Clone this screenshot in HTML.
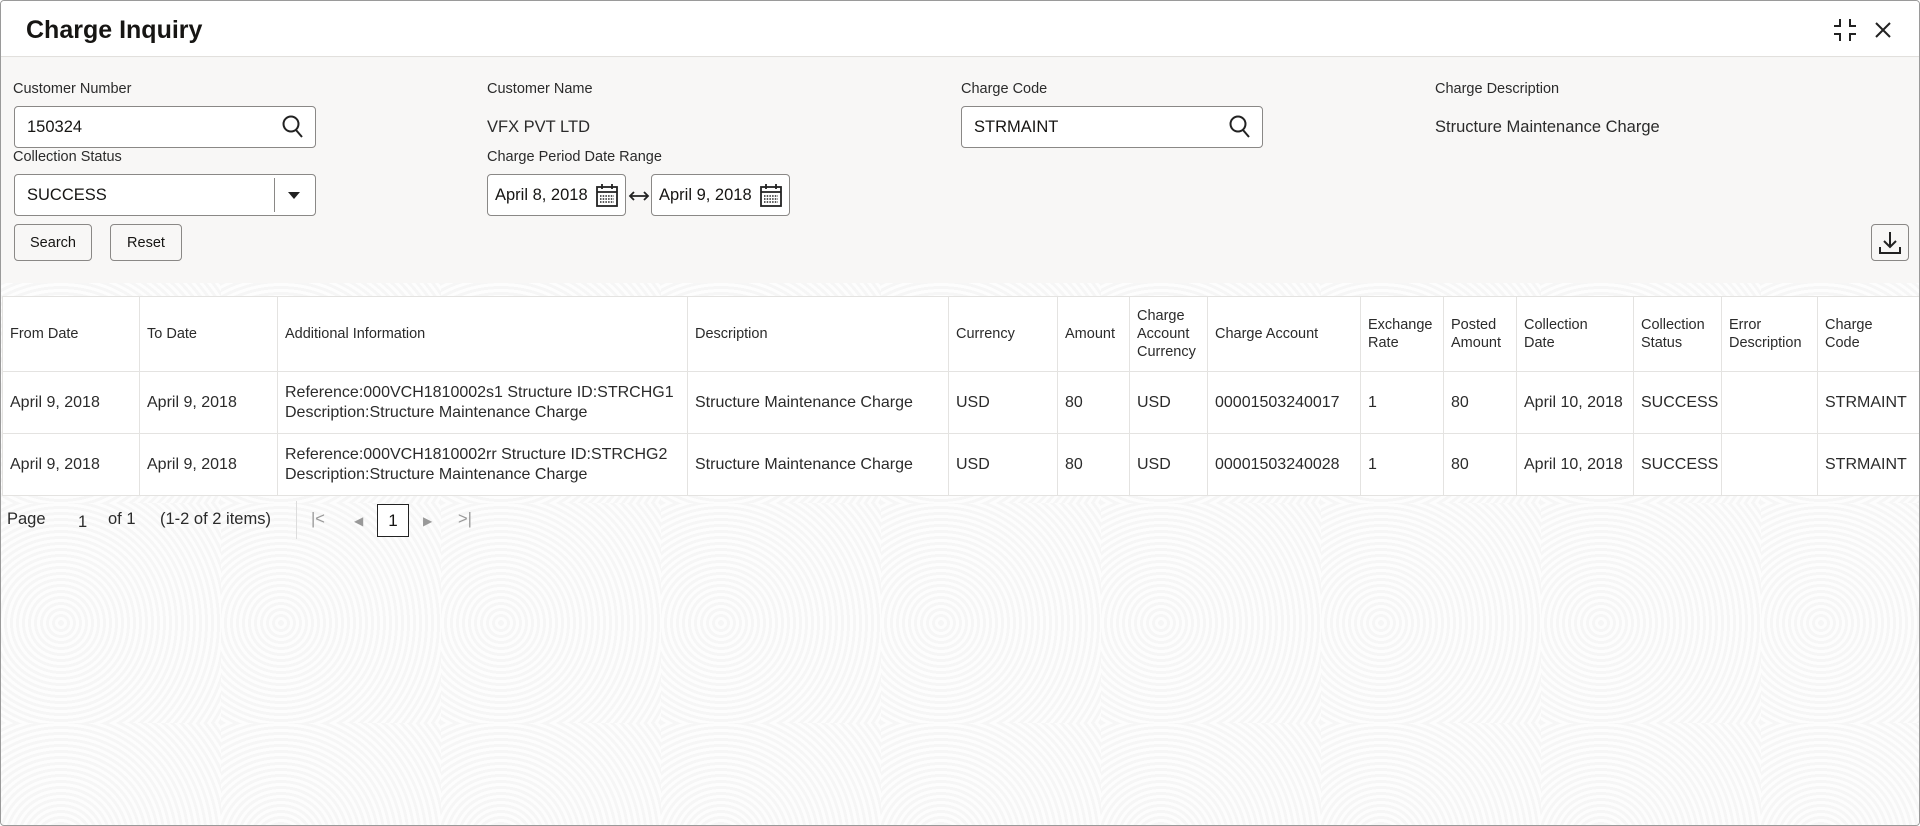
<!DOCTYPE html>
<html><head><meta charset="utf-8"><style>
*{box-sizing:border-box;margin:0;padding:0}
body{width:1920px;height:826px;overflow:hidden;font-family:"Liberation Sans",sans-serif;color:#161513;background:#fff;position:relative}
.frame{position:absolute;left:0;top:0;width:1920px;height:826px;border:1px solid #9a9a9a;border-radius:4px;overflow:hidden;background:#f6f6f5}
.hdr{position:absolute;left:0;top:0;width:100%;height:56px;background:#fff;border-bottom:1px solid #e2e0dd}
.hdr h1{position:absolute;left:25px;top:15px;font-size:25px;font-weight:bold}
.form{position:absolute;left:0;top:57px;width:100%;height:225px;background:#f8f7f6}
.lbl{position:absolute;font-size:14.5px;color:#2b2b2b}
.val{position:absolute;font-size:16.5px;color:#2b2b2b}
.box{position:absolute;background:#fff;border:1px solid #8a8886;border-radius:4px;font-size:16.5px;padding-left:12px;display:flex;align-items:center}
.btn{position:absolute;border:1px solid #8a8886;border-radius:4px;font-size:14.5px;display:flex;align-items:center;justify-content:center;background:#f8f7f6}
.bgpat{position:absolute;left:0;top:282px;width:100%;height:544px;background:repeating-radial-gradient(circle at 60px 120px,#f6f6f6 0 3px,#fdfdfd 3px 6px);background-size:220px 220px}
table{position:absolute;left:1px;top:295px;width:1918px;border-collapse:collapse;background:#fff;table-layout:fixed}
td,th{border:1px solid #e4e3e1;text-align:left;vertical-align:middle;padding:0 7px;overflow:hidden}
th{font-weight:normal;font-size:14.5px;height:75px;line-height:18px;color:#2b2b2b}
td{font-size:16px;height:62px;line-height:20px;color:#2b2b2b;white-space:nowrap}
.pg{position:absolute;top:509px;font-size:16.5px;color:#2b2b2b}
</style></head><body><div class="frame">
<div class="hdr"><h1>Charge Inquiry</h1>
<svg style="position:absolute;left:1832px;top:17px" width="24" height="24" viewBox="0 0 24 24" fill="none" stroke="#222" stroke-width="2"><path d="M1 8h6V1M17 1v7h6M1 16h6v7M17 23v-7h6"/></svg>
<svg style="position:absolute;left:1873px;top:20px" width="18" height="18" viewBox="0 0 18 18" stroke="#222" stroke-width="2"><path d="M2 2L16 16M16 2L2 16"/></svg>
</div>
<div class="form"></div>
<div class="lbl" style="left:12px;top:80px">Customer Number</div>
<div class="box" style="left:13px;top:105px;width:302px;height:42px">150324</div>
<svg style="position:absolute;left:281px;top:114px" width="22" height="24" viewBox="0 0 22 24" fill="none" stroke="#222" stroke-width="2"><circle cx="9" cy="9" r="7.5"/><path d="M14 15l6 7"/></svg>
<div class="lbl" style="left:486px;top:80px">Customer Name</div>
<div class="val" style="left:486px;top:117px">VFX PVT LTD</div>
<div class="lbl" style="left:960px;top:80px">Charge Code</div>
<div class="box" style="left:960px;top:105px;width:302px;height:42px">STRMAINT</div>
<svg style="position:absolute;left:1228px;top:114px" width="22" height="24" viewBox="0 0 22 24" fill="none" stroke="#222" stroke-width="2"><circle cx="9" cy="9" r="7.5"/><path d="M14 15l6 7"/></svg>
<div class="lbl" style="left:1434px;top:80px">Charge Description</div>
<div class="val" style="left:1434px;top:117px">Structure Maintenance Charge</div>
<div class="lbl" style="left:12px;top:148px">Collection Status</div>
<div class="box" style="left:13px;top:173px;width:302px;height:42px">SUCCESS</div>
<div style="position:absolute;left:273px;top:177px;width:1px;height:34px;background:#8a8886"></div>
<div style="position:absolute;left:287px;top:191px;width:0;height:0;border-left:6px solid transparent;border-right:6px solid transparent;border-top:7px solid #222"></div>
<div class="lbl" style="left:486px;top:148px">Charge Period Date Range</div>
<div class="box" style="left:486px;top:173px;width:139px;height:42px;padding-left:7px">April 8, 2018</div>
<div class="box" style="left:650px;top:173px;width:139px;height:42px;padding-left:7px">April 9, 2018</div>
<svg style="position:absolute;left:595px;top:182px" width="22" height="24" viewBox="0 0 22 24" fill="none" stroke="#222" stroke-width="1.8"><rect x="1" y="4" width="20" height="19"/><path d="M1 9h20M6 1v5M16 1v5"/><path d="M4 13h14M4 16h14M4 19h14" stroke-dasharray="1.5 1.2" stroke-width="1.5"/></svg>
<svg style="position:absolute;left:759px;top:182px" width="22" height="24" viewBox="0 0 22 24" fill="none" stroke="#222" stroke-width="1.8"><rect x="1" y="4" width="20" height="19"/><path d="M1 9h20M6 1v5M16 1v5"/><path d="M4 13h14M4 16h14M4 19h14" stroke-dasharray="1.5 1.2" stroke-width="1.5"/></svg>
<svg style="position:absolute;left:627px;top:188px" width="22" height="14" viewBox="0 0 22 14" fill="none" stroke="#222" stroke-width="1.8"><path d="M2 7h18M6 3L2 7l4 4M16 3l4 4-4 4"/></svg>
<div class="btn" style="left:13px;top:223px;width:78px;height:37px">Search</div>
<div class="btn" style="left:109px;top:223px;width:72px;height:37px">Reset</div>
<div class="btn" style="left:1870px;top:223px;width:38px;height:37px"><svg width="24" height="26" viewBox="0 0 24 26" fill="none" stroke="#222" stroke-width="2"><path d="M12 2v15M6 11l6 6 6-6M2 17v6h20v-6"/></svg></div>
<div class="bgpat"></div>
<table>
<colgroup><col style="width:137px"><col style="width:138px"><col style="width:410px"><col style="width:261px"><col style="width:109px"><col style="width:72px"><col style="width:78px"><col style="width:153px"><col style="width:83px"><col style="width:73px"><col style="width:117px"><col style="width:88px"><col style="width:96px"><col style="width:103px"></colgroup>
<tr><th>From Date</th><th>To Date</th><th>Additional Information</th><th>Description</th><th>Currency</th><th>Amount</th><th>Charge Account Currency</th><th>Charge Account</th><th>Exchange Rate</th><th>Posted Amount</th><th>Collection<br>Date</th><th>Collection Status</th><th>Error Description</th><th>Charge<br>Code</th></tr>
<tr><td>April 9, 2018</td><td>April 9, 2018</td><td>Reference:000VCH1810002s1 Structure ID:STRCHG1<br>Description:Structure Maintenance Charge</td><td>Structure Maintenance Charge</td><td>USD</td><td>80</td><td>USD</td><td>00001503240017</td><td>1</td><td>80</td><td>April 10, 2018</td><td>SUCCESS</td><td></td><td>STRMAINT</td></tr>
<tr><td>April 9, 2018</td><td>April 9, 2018</td><td>Reference:000VCH1810002rr Structure ID:STRCHG2<br>Description:Structure Maintenance Charge</td><td>Structure Maintenance Charge</td><td>USD</td><td>80</td><td>USD</td><td>00001503240028</td><td>1</td><td>80</td><td>April 10, 2018</td><td>SUCCESS</td><td></td><td>STRMAINT</td></tr>
</table>
<div class="pg" style="left:6px">Page</div>
<div class="pg" style="left:77px;top:512px">1</div>
<div class="pg" style="left:107px">of 1</div>
<div class="pg" style="left:159px">(1-2 of 2 items)</div>
<div style="position:absolute;left:295px;top:500px;width:1px;height:38px;background:#ddd"></div>
<div class="pg" style="left:310px;color:#999">|&lt;</div>
<div class="pg" style="left:353px;color:#999;font-size:12px;top:513px">&#9664;</div>
<div style="position:absolute;left:376px;top:503px;width:32px;height:33px;border:1px solid #222;font-size:17px;display:flex;align-items:center;justify-content:center;background:#fff">1</div>
<div class="pg" style="left:422px;color:#999;font-size:12px;top:513px">&#9654;</div>
<div class="pg" style="left:457px;color:#999">&gt;|</div>
</div></body></html>
